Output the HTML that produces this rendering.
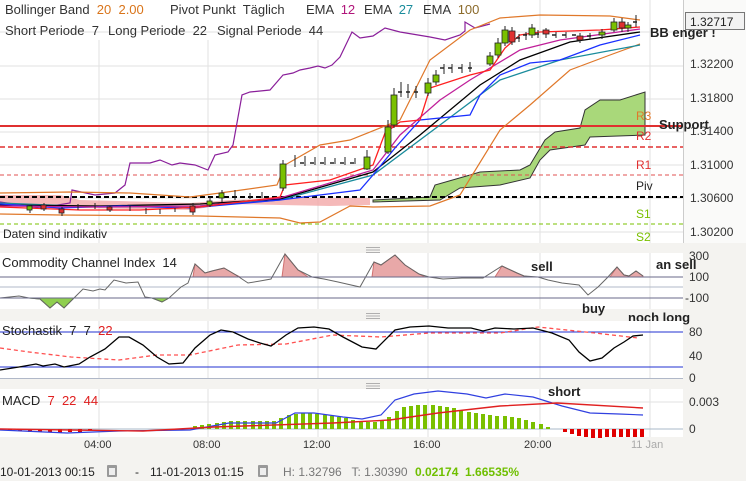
<!DOCTYPE html>
<html><head><meta charset="utf-8"><style>
body{margin:0;width:746px;height:481px;overflow:hidden;background:#f4f3f0;font-family:"Liberation Sans",sans-serif}
svg{display:block}
text{font-family:"Liberation Sans",sans-serif;white-space:pre}
</style></head><body>
<svg width="746" height="481" viewBox="0 0 746 481" xmlns="http://www.w3.org/2000/svg" xml:space="preserve">
<rect x="0" y="0" width="746" height="481" fill="#f4f3f0"/>
<rect x="0" y="0" width="746" height="243" fill="#fff"/>
<rect x="683" y="0" width="63" height="243" fill="#fafaf9"/>
<g stroke="#e2e2e2" stroke-width="1">
<line x1="0" y1="32" x2="683" y2="32"/><line x1="0" y1="66" x2="683" y2="66"/><line x1="0" y1="99" x2="683" y2="99"/><line x1="0" y1="132" x2="683" y2="132"/><line x1="0" y1="165" x2="683" y2="165"/><line x1="0" y1="198" x2="683" y2="198"/><line x1="0" y1="232" x2="683" y2="232"/>
<line x1="99" y1="40" x2="99" y2="243"/><line x1="208" y1="40" x2="208" y2="243"/><line x1="318" y1="40" x2="318" y2="243"/><line x1="428" y1="0" x2="428" y2="243"/><line x1="540" y1="0" x2="540" y2="243"/><line x1="650" y1="0" x2="650" y2="243"/>
</g>
<line x1="683.5" y1="0" x2="683.5" y2="243" stroke="#ccc"/>
<g font-size="13" fill="#333">
<text x="5" y="14">Bollinger Band  <tspan fill="#d9741a">20  2.00</tspan></text>
<text x="170" y="14">Pivot Punkt  Täglich</text>
<text x="306" y="14">EMA  <tspan fill="#b0157a">12</tspan></text>
<text x="364" y="14">EMA  <tspan fill="#1a8c9c">27</tspan></text>
<text x="423" y="14">EMA  <tspan fill="#8b6a2a">100</tspan></text>
<text x="5" y="35">Short Periode  7</text>
<text x="108" y="35">Long Periode  22</text>
<text x="217" y="35">Signal Periode  44</text>
</g>
<path d="M0,195 L60,195 L80,200 L190,203 L230,200 L280,198 L370,198 L370,205 L330,206 L280,205 L230,204 L190,210 L80,208 L0,205 Z" fill="#f3a8a8" opacity="0.8"/>
<path d="M373,200 L430,197 L435,185 L470,175 L480,172 L520,170 L530,165 L545,140 L555,132 L580,128 L585,110 L600,100 L620,100 L645,92 L645,135 L590,137 L585,145 L550,150 L540,160 L530,178 L500,185 L460,188 L440,200 L373,202 Z" fill="#a9d87a" stroke="#333" stroke-width="1"/>
<line x1="0" y1="126" x2="683" y2="126" stroke="#e03030" stroke-width="2"/>
<line x1="0" y1="147" x2="683" y2="147" stroke="#e03030" stroke-width="1.5" stroke-dasharray="5,3"/>
<line x1="0" y1="175" x2="683" y2="175" stroke="#e05050" stroke-width="1" stroke-dasharray="4,3"/>
<line x1="0" y1="197" x2="683" y2="197" stroke="#000" stroke-width="2" stroke-dasharray="5,3"/>
<line x1="0" y1="224" x2="683" y2="224" stroke="#7ac000" stroke-width="1" stroke-dasharray="4,3"/>
<polyline fill="none" stroke="#8a1f9a" stroke-width="1.2" points="0,202 40,208 70,203 72,190 95,195 115,193 125,185 130,163 150,163 160,160 172,165 180,163 195,165 208,170 215,155 228,152 233,145 242,95 250,92 270,90 283,75 293,73 300,70 310,68 318,66 325,68 332,65 340,57 352,32 360,38 373,36 385,28 400,32 430,37 445,40 460,35 465,31 465,22 475,28 490,24"/>
<polyline fill="none" stroke="#e0782a" stroke-width="1.2" points="0,193 70,192 130,193 190,197 220,193 277,185 285,165 320,145 350,140 400,120 430,60 470,30 500,18 540,15 610,16 640,20"/>
<polyline fill="none" stroke="#e0782a" stroke-width="1.2" points="0,214 60,215 200,216 280,218 300,223 320,222 350,206 373,207 430,206 460,195 500,130 530,105 570,70 610,55 640,44"/>
<polyline fill="none" stroke="#1a8c9c" stroke-width="1.3" points="0,203 100,207 200,206 280,200 373,175 440,125 500,80 560,60 640,45"/>
<polyline fill="none" stroke="#000" stroke-width="1.3" points="0,205 100,206 200,204 280,199 373,172 420,135 480,85 520,60 570,42 640,32"/>
<polyline fill="none" stroke="#1a30ff" stroke-width="1.3" points="0,204 60,208 120,206 190,208 280,200 360,190 373,175 395,148 420,120 470,115 480,95 500,75 530,63 560,60 600,45 640,35"/>
<polyline fill="none" stroke="#c0209a" stroke-width="1.3" points="0,206 100,207 200,206 280,198 373,170 400,135 440,100 470,80 520,50 560,40 640,29"/>
<polyline fill="none" stroke="#ff2020" stroke-width="1.3" points="0,207 80,210 140,210 200,207 280,197 285,185 330,180 373,165 385,133 400,122 420,120 430,88 470,75 490,70 505,48 520,35 540,32 600,30 640,27"/>
<g stroke="#222" stroke-width="1">
<path d="M30,205v8M44,203v8M62,207v9M78,204v6M95,203v6M110,206v6M130,206v5M146,208v6M160,209v5M175,208v4M193,203v12M210,197v10M222,190v12M235,190v10M250,193v6M262,192v6M283,160v31M295,155v12M305,156v10M315,157v8M325,157v8M335,158v6M345,157v8M355,158v6M367,150v20M388,120v34M394,88v40M401,82v15M408,84v14M416,86v12M428,78v18M436,70v15M444,64v10M452,64v9M462,64v9M470,62v10M490,52v14M498,38v20M505,26v20M512,27v18M519,34v8M526,32v8M532,24v14M538,30v8M546,28v10M556,32v6M566,32v6M580,33v10M590,33v6M602,29v10M614,18v14M622,18v14M628,22v10M636,15v12"/>
</g>
<g stroke="#222" stroke-width="0.8">
<rect x="27" y="206" width="5" height="4" fill="#7ac000"/><rect x="41" y="205" width="5" height="4" fill="#e03030"/><rect x="59" y="209" width="5" height="4" fill="#e03030"/><rect x="107" y="207" width="5" height="3" fill="#e03030"/><rect x="190" y="206" width="5" height="6" fill="#e03030"/><rect x="207" y="201" width="5" height="4" fill="#7ac000"/><rect x="219" y="193" width="5" height="5" fill="#7ac000"/>
<rect x="280" y="164" width="6" height="24" fill="#7ac000"/><rect x="364" y="157" width="6" height="12" fill="#7ac000"/><rect x="385" y="127" width="6" height="25" fill="#7ac000"/><rect x="391" y="95" width="6" height="30" fill="#7ac000"/><rect x="425" y="83" width="6" height="10" fill="#7ac000"/><rect x="433" y="75" width="6" height="7" fill="#7ac000"/><rect x="487" y="56" width="6" height="8" fill="#7ac000"/><rect x="495" y="43" width="6" height="12" fill="#7ac000"/><rect x="502" y="30" width="6" height="13" fill="#7ac000"/><rect x="509" y="31" width="6" height="11" fill="#e03030"/><rect x="529" y="28" width="6" height="7" fill="#7ac000"/><rect x="543" y="30" width="6" height="4" fill="#e03030"/><rect x="577" y="36" width="6" height="4" fill="#e03030"/><rect x="599" y="32" width="6" height="3" fill="#7ac000"/><rect x="611" y="22" width="6" height="8" fill="#7ac000"/><rect x="619" y="22" width="6" height="6" fill="#e03030"/><rect x="625" y="25" width="6" height="3" fill="#7ac000"/>
</g>
<g stroke="#222" stroke-width="1.5"><path d="M300,163h4M310,163h4M320,163h4M330,163h4M340,163h4M350,163h4M398,92h4M406,92h4M414,92h4M440,68h4M448,68h4M458,68h4M468,68h4M516,38h4M523,35h4M535,34h4M552,35h4M562,35h4M572,35h4M587,36h4M633,22h4"/></g>
<g font-size="12">
<text x="636" y="120" fill="#e0782a">R3</text>
<text x="636" y="140" fill="#e03030">R2</text>
<text x="636" y="169" fill="#e03030">R1</text>
<text x="636" y="190" fill="#222">Piv</text>
<text x="636" y="218" fill="#7ac000">S1</text>
<text x="636" y="241" fill="#7ac000">S2</text>
</g>
<text x="659" y="129" font-size="13" font-weight="bold" fill="#222">Support</text>
<text x="650" y="37" font-size="13" font-weight="bold" fill="#222">BB enger !</text>
<text x="3" y="238" font-size="12" fill="#222">Daten sind indikativ</text>
<g font-size="12" fill="#333">
<text x="690" y="68">1.32200</text><text x="690" y="102">1.31800</text><text x="690" y="135">1.31400</text><text x="690" y="169">1.31000</text><text x="690" y="202">1.30600</text><text x="690" y="236">1.30200</text>
</g>
<rect x="685.5" y="12.5" width="59" height="17" fill="#f2f2f2" stroke="#777"/>
<text x="690" y="26" font-size="12" fill="#222">1.32717</text>
<g stroke="#999" stroke-width="0.8"><path d="M366,247.5h14M366,250h14M366,252.5h14M366,313.5h14M366,316h14M366,318.5h14M366,383.5h14M366,386h14M366,388.5h14"/></g>
<rect x="0" y="253" width="683" height="56" fill="#fff"/>
<g stroke="#e2e2e2"><line x1="99" y1="253" x2="99" y2="309"/><line x1="208" y1="253" x2="208" y2="309"/><line x1="318" y1="253" x2="318" y2="309"/><line x1="428" y1="253" x2="428" y2="309"/><line x1="540" y1="253" x2="540" y2="309"/><line x1="650" y1="253" x2="650" y2="309"/></g>
<line x1="0" y1="287" x2="683" y2="287" stroke="#b0b8c8"/>
<path d="M29,298 L40,299 L50,308 L57,302 L64,308 L74,298 Z M152,298 L162,302 L169,298 Z" fill="#8fcf4f" stroke="#6aa830"/>
<path d="M193,277 L195,264 L205,273 L212,271 L224,268 L236,275 L240,277 Z M282,277 L285,254 L298,270 L308,277 Z M372,277 L374,262 L381,265 L395,255 L405,265 L419,274 L425,277 Z M495,277 L502,266 L517,273 L524,276 L530,277 Z M610,277 L617,267 L624,275 L629,276 L636,271 L643,276 L643,277 Z" fill="#e8a8a8" stroke="#d07070"/>
<polyline fill="none" stroke="#666" stroke-width="1" points="0,298 19,296 29,298 40,299 50,308 57,302 64,308 74,298 83,289 93,291 100,289 105,290 114,280 126,283 138,282 145,297 152,298 162,302 169,298 181,287 188,283 195,264 205,273 212,271 224,268 236,275 248,283 260,281 271,279 285,254 298,270 312,277 324,279 338,282 360,287 374,262 381,265 395,255 405,265 419,274 429,277 443,279 462,278 483,278 502,266 517,273 524,276 538,277 548,280 562,283 579,285 588,295 598,287 607,278 617,267 624,275 629,276 636,271 643,276"/>
<line x1="0" y1="277" x2="683" y2="277" stroke="#6a6a8a"/>
<line x1="0" y1="298" x2="683" y2="298" stroke="#6a6a8a"/>
<text x="2" y="267" font-size="13" fill="#222">Commodity Channel Index  14</text>
<g font-size="12" fill="#333"><text x="689" y="260">300</text><text x="689" y="281">100</text><text x="685" y="302">-100</text></g>
<g font-size="13" font-weight="bold" fill="#222"><text x="531" y="271">sell</text><text x="656" y="269">an sell</text><text x="582" y="313">buy</text><text x="628" y="322">noch long</text></g>
<rect x="0" y="321" width="683" height="58" fill="#fff"/>
<g stroke="#e2e2e2"><line x1="99" y1="321" x2="99" y2="379"/><line x1="208" y1="321" x2="208" y2="379"/><line x1="318" y1="321" x2="318" y2="379"/><line x1="428" y1="321" x2="428" y2="379"/><line x1="540" y1="321" x2="540" y2="379"/><line x1="650" y1="321" x2="650" y2="379"/></g>
<line x1="0" y1="332" x2="683" y2="332" stroke="#2030d0"/>
<line x1="0" y1="367" x2="683" y2="367" stroke="#2030d0"/>
<line x1="0" y1="378.5" x2="683" y2="378.5" stroke="#b0b8c8"/>
<polyline fill="none" stroke="#ff5050" stroke-width="1.3" stroke-dasharray="4,3" points="0,348 29,352 71,357 119,360 157,355 190,355 238,345 286,344 333,335 381,337 429,333 500,333 538,327 595,333 638,338"/>
<polyline fill="none" stroke="#000" stroke-width="1.3" points="0,370 19,367 36,364 43,366 55,364 64,367 79,364 90,357 105,349 119,337 129,337 143,345 157,357 169,364 183,363 195,348 210,335 221,330 233,332 248,339 260,343 271,346 286,335 298,328 314,327 329,329 343,337 362,347 376,349 395,330 410,327 429,326 448,328 471,328 483,331 495,328 514,329 533,328 552,333 569,340 579,352 590,361 602,358 614,348 624,342 633,336 643,335"/>
<text x="2" y="335" font-size="13" fill="#222">Stochastik  7  7  <tspan fill="#e02020">22</tspan></text>
<g font-size="12" fill="#333"><text x="689" y="336">80</text><text x="689" y="360">40</text><text x="689" y="382">0</text></g>
<rect x="0" y="389" width="683" height="48" fill="#fff"/>
<g stroke="#e2e2e2"><line x1="99" y1="389" x2="99" y2="437"/><line x1="208" y1="389" x2="208" y2="437"/><line x1="318" y1="389" x2="318" y2="437"/><line x1="428" y1="389" x2="428" y2="437"/><line x1="540" y1="389" x2="540" y2="437"/><line x1="650" y1="389" x2="650" y2="437"/></g>
<line x1="0" y1="402" x2="683" y2="402" stroke="#e2e2e2"/>
<line x1="0" y1="429" x2="683" y2="429" stroke="#a8b8c8"/>
<path stroke="#7ac000" stroke-width="4" fill="none" d="M195,429V426M202,429V425M209,429V424M217,429V423M224,429V422M231,429V421M238,429V421M245,429V421M253,429V421M260,429V421M267,429V421M274,429V421M281,429V418M289,429V415M296,429V414M303,429V413M310,429V413M317,429V414M325,429V415M332,429V416M339,429V417M346,429V418M353,429V420M361,429V421M368,429V422M375,429V422M382,429V420M389,429V417M397,429V411M404,429V407M411,429V406M418,429V405M425,429V405M433,429V405M440,429V406M447,429V407M454,429V408M461,429V410M469,429V412M476,429V413M483,429V414M490,429V415M497,429V416M505,429V416M512,429V417M519,429V418M526,429V420M533,429V422M541,429V424M548,429V427"/>
<path stroke="#e00000" stroke-width="4" fill="none" d="M10,429V431M20,429V431M30,429V432M40,429V432M50,429V432M60,429V433M70,429V432M80,429V432M90,429V431M565,429V432M572,429V434M579,429V436M586,429V437M593,429V438M600,429V438M607,429V437M614,429V437M621,429V437M628,429V437M635,429V437M642,429V437"/>
<polyline fill="none" stroke="#3040e0" stroke-width="1.2" points="0,430 67,433 119,431 190,430 229,423 276,423 295,413 314,413 343,417 362,419 381,415 395,400 414,394 438,391 467,394 486,398 505,394 533,397 562,406 590,413 619,414 643,415"/>
<polyline fill="none" stroke="#e02020" stroke-width="1.4" points="0,429 143,431 214,427 333,423 390,420 438,413 500,406 557,403 643,408"/>
<text x="2" y="405" font-size="13" fill="#222">MACD  <tspan fill="#e02020">7  22  44</tspan></text>
<text x="548" y="396" font-size="13" font-weight="bold" fill="#222">short</text>
<g font-size="12" fill="#333"><text x="689" y="406">0.003</text><text x="689" y="433">0</text></g>
<g font-size="11" fill="#333"><text x="84" y="448">04:00</text><text x="193" y="448">08:00</text><text x="303" y="448">12:00</text><text x="413" y="448">16:00</text><text x="524" y="448">20:00</text><text x="631" y="448" fill="#aaa">11 Jan</text></g>
<g font-size="12">
<text x="0" y="476" fill="#222">10-01-2013 00:15</text>
<rect x="107" y="465" width="10" height="12" fill="#999" rx="1"/><rect x="109" y="468" width="6" height="7" fill="#eee"/>
<text x="135" y="476" fill="#222">-</text>
<text x="150" y="476" fill="#222">11-01-2013 01:15</text>
<rect x="258" y="465" width="10" height="12" fill="#999" rx="1"/><rect x="260" y="468" width="6" height="7" fill="#eee"/>
<text x="283" y="476" fill="#777">H: 1.32796   T: 1.30390</text>
<text x="415" y="476" fill="#6fbf00" font-weight="bold">0.02174  1.66535%</text>
</g>
</svg>
</body></html>
